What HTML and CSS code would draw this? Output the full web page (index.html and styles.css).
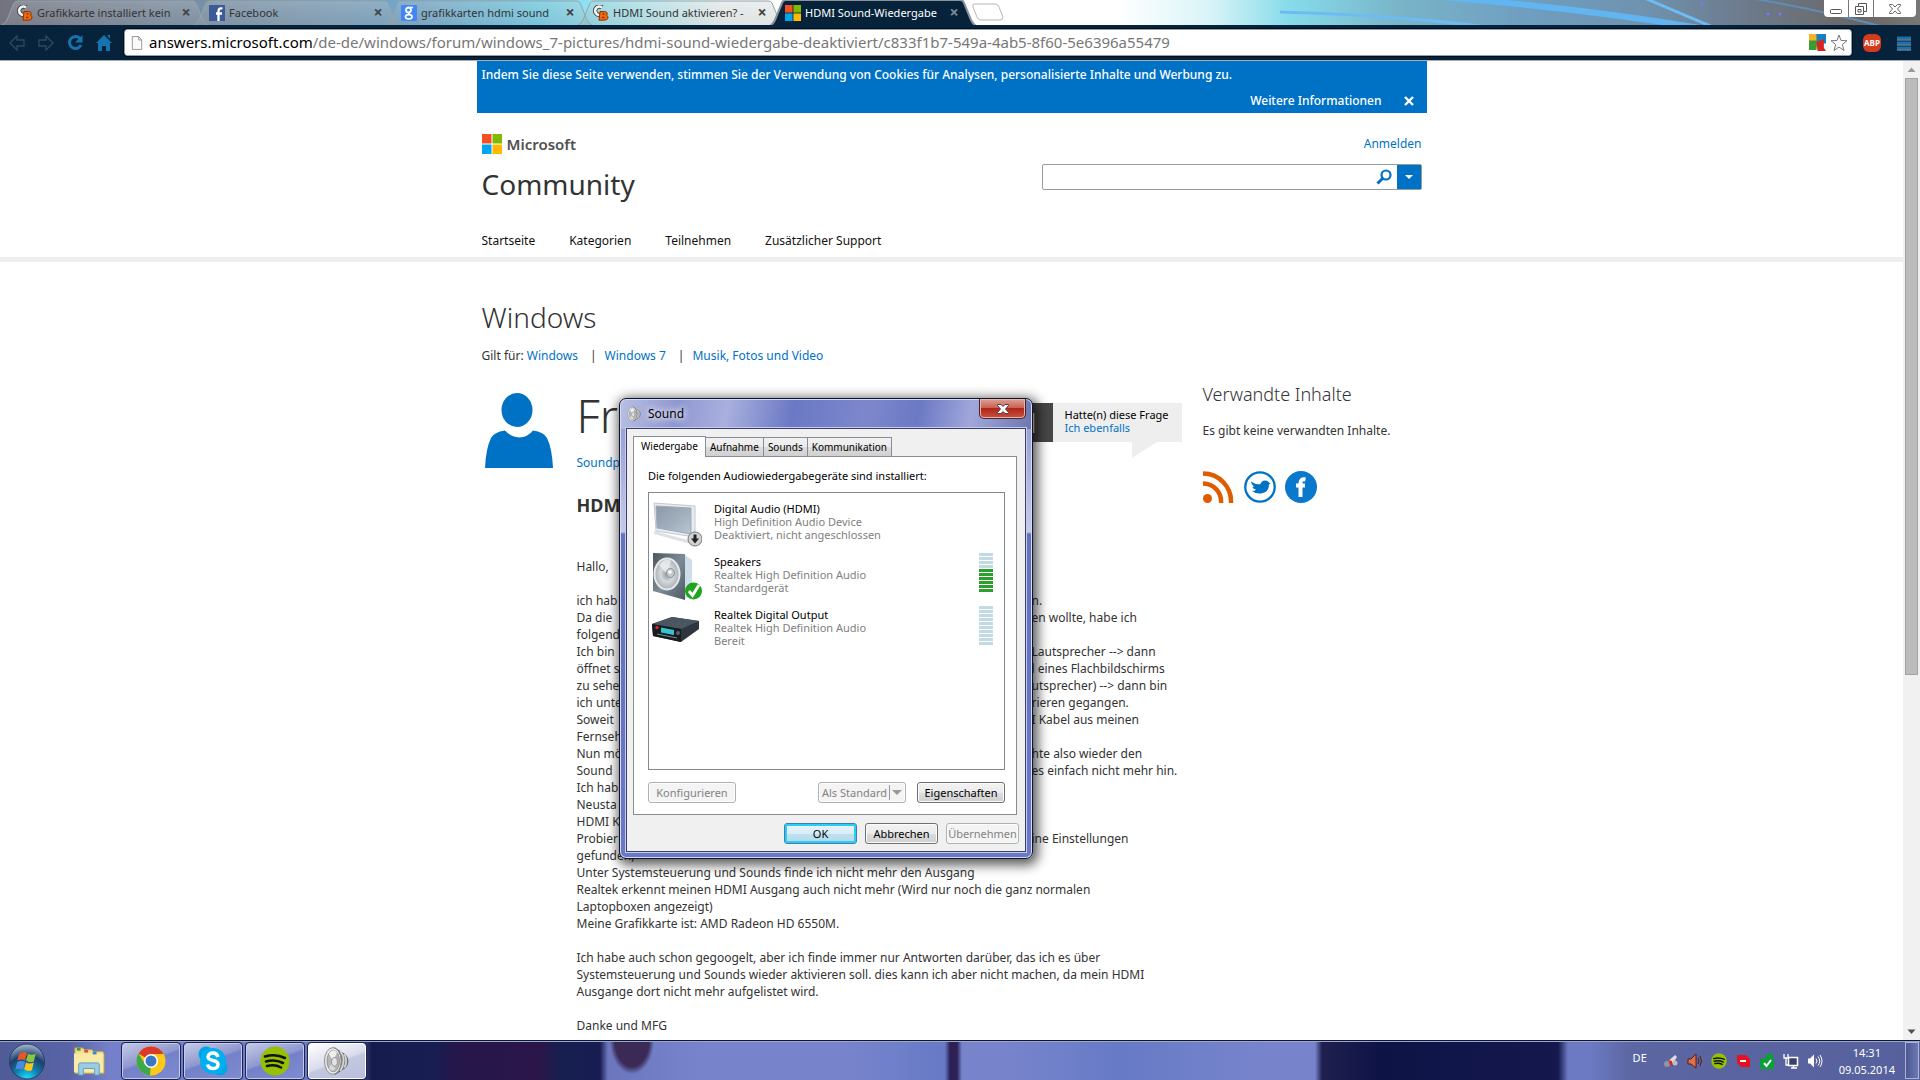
FILE: index.html
```html
<!DOCTYPE html>
<html lang="de">
<head>
<meta charset="utf-8">
<title>HDMI Sound-Wiedergabe</title>
<link rel="stylesheet" href="styles.css">
</head>
<body>
<svg class="defs" aria-hidden="true">
  <defs>
    <linearGradient id="tabfill" x1="0" y1="0" x2="0" y2="1"><stop offset="0" stop-color="#ccc" stop-opacity=".3"/><stop offset="1" stop-color="#999" stop-opacity=".25"/></linearGradient>
    <linearGradient id="screen" x1="0" y1="0" x2="1" y2="1"><stop offset="0" stop-color="#8a98a8"/><stop offset=".6" stop-color="#a4b1bf"/><stop offset="1" stop-color="#b9c6d3"/></linearGradient>
    <linearGradient id="box" x1="0" y1="0" x2="1" y2="1"><stop offset="0" stop-color="#49565f"/><stop offset=".5" stop-color="#7c8b95"/><stop offset="1" stop-color="#4c5962"/></linearGradient>
    <radialGradient id="cone"><stop offset="0" stop-color="#8d9499"/><stop offset=".5" stop-color="#d5d9dc"/><stop offset="1" stop-color="#a9afb4"/></radialGradient>
    <radialGradient id="orb" cx=".5" cy="1" r="1"><stop offset="0" stop-color="#1fe3ff"/><stop offset=".35" stop-color="#0f7fae"/><stop offset=".65" stop-color="#1d3f6b"/><stop offset="1" stop-color="#a9bcd2"/></radialGradient>
    <symbol id="mslogo" viewBox="0 0 20 20"><path fill="#f25022" d="M0 0h9.500v9.500H0z"/><path fill="#7fba00" d="M10.500 0H20v9.500h-9.500z"/><path fill="#00a4ef" d="M0 10.500h9.500V20H0z"/><path fill="#ffb900" d="M10.500 10.500H20V20h-9.500z"/></symbol>
    <symbol id="cb" viewBox="0 0 16 16"><path d="M9 2.500A4.200 4.200 0 1 0 9 9" fill="none" stroke="#444" stroke-width="4.400"/><path d="M9 2.500A4.200 4.200 0 1 0 9 9" fill="none" stroke="#f4f4f4" stroke-width="2.600"/><path d="M7 6.500h4.500q3 .2 2.800 2.300l-.8 1.600q2 .6 1.500 2.600-.6 2.200-3.500 2.200H6z" fill="#f36b0c" stroke="#8a3200"/><path d="M9.500 9h2M9 12.500h2.500" stroke="#8a3200" stroke-width="1.300"/></symbol>
    <symbol id="tabshape" viewBox="0 0 208 25" preserveAspectRatio="none"><path d="M1 25Q4 24 6 20L13 3Q14 1 17 1H191Q194 1 195 3L202 20Q204 24 207 25" fill="url(#tabfill)" stroke="#93a3ac"/></symbol>
    <symbol id="tabactive" viewBox="0 0 208 25" preserveAspectRatio="none"><path d="M1 26Q4 24 6 20L13 3Q14 0 17 0H191Q194 0 195 3L202 20Q204 24 207 26z" fill="#06233b" stroke="#8b9196" stroke-width="2"/></symbol>
    <symbol id="spot" viewBox="0 0 30 30"><circle cx="15" cy="15" r="14.500" fill="#95c100"/><path d="M5 10.500q11-3 20 1.500M6 15.500q9-2.500 17 1.500M7 20q8-2 14 1.500" fill="none" stroke="#111" stroke-width="2.600" stroke-linecap="round"/></symbol>
    <symbol id="speaker" viewBox="0 0 32 36"><path d="M13 2L22 8Q29 11 29 18T23 28L14 34z" fill="#858585" stroke="#555"/><path d="M20 6q8 10 0 24M25 10q4 8 0 16" fill="none" stroke="#d5d5d5" stroke-width="2"/><ellipse cx="11" cy="18" rx="10" ry="16" fill="#ececec" stroke="#7a7a7a"/><ellipse cx="11.500" cy="18" rx="7.500" ry="13" fill="#b4b4b4" stroke="#888"/><path d="M11 18L6 9q6-7 10-1z" fill="#eee"/><path d="M11 18l-5 9q4 5 8 1z" fill="#d8d8d8"/><ellipse cx="13" cy="19" rx="3.500" ry="5" fill="#e4e4e4" stroke="#888"/></symbol>
  </defs>
</svg>

<header class="chrome">
  <div class="tabstrip">
    <svg class="streaks" viewBox="0 0 640 25" aria-hidden="true"><path d="M150-4Q300 8 420 28" fill="none" stroke="#5fb8f7" stroke-width="6" opacity=".9"/><path d="M362-3L435 28M0 12q110 3 200 14" fill="none" stroke="#6cbcf2" stroke-width="3"/><path d="M470-2Q540 10 600 26" fill="none" stroke="#5f8fb8" stroke-width="2"/><g fill="#7d74ff"><circle cx="488" cy="14" r="1.500"/><circle cx="500" cy="14" r="1.500"/><circle cx="422" cy="4" r="1.500"/></g></svg>
    <div class="tab"><svg class="shape"><use href="#tabshape"/></svg><svg class="fav"><use href="#cb"/></svg><span class="label">Grafikkarte installiert kein</span><button aria-label="Tab schließen">×</button></div>
    <div class="tab"><svg class="shape"><use href="#tabshape"/></svg><svg class="fav" viewBox="0 0 16 16"><path fill="#3c5a98" d="M0 0h16v16H0z"/><path d="M13.500 3.500Q9.500 2.500 9.500 6.500V16M7 8.500h6" fill="none" stroke="#fff" stroke-width="2.300"/></svg><span class="label">Facebook</span><button aria-label="Tab schließen">×</button></div>
    <div class="tab"><svg class="shape"><use href="#tabshape"/></svg><svg class="fav" viewBox="0 0 16 16"><rect width="16" height="16" rx="1" fill="#4285f4"/><circle cx="7.500" cy="5" r="2.500" fill="none" stroke="#fff" stroke-width="1.800"/><path d="M9 2.500h3M9 7q-2.500 1.500 0 2.500" fill="none" stroke="#fff" stroke-width="1.500"/><ellipse cx="7.800" cy="11.800" rx="3.300" ry="2.200" fill="none" stroke="#fff" stroke-width="1.600"/></svg><span class="label">grafikkarten hdmi sound</span><button aria-label="Tab schließen">×</button></div>
    <div class="tab"><svg class="shape"><use href="#tabshape"/></svg><svg class="fav"><use href="#cb"/></svg><span class="label">HDMI Sound aktivieren? -</span><button aria-label="Tab schließen">×</button></div>
    <div class="tab active"><svg class="shape"><use href="#tabactive"/></svg><svg class="fav"><use href="#mslogo"/></svg><span class="label">HDMI Sound-Wiedergabe</span><button aria-label="Tab schließen">×</button></div>
    <button class="newtab" aria-label="Neuer Tab"><svg viewBox="0 0 34 18"><path d="M3 1h21q3 0 4 3l4 10q0 3-3 3H10q-3 0-4-3L2 4Q1 1 3 1z" fill="#fff" fill-opacity=".5" stroke="#b5b5b5"/></svg></button>
    <div class="winctl">
      <button aria-label="Minimieren"><svg viewBox="0 0 14 16"><rect x="1.500" y="8.500" width="11" height="4" rx="1" fill="#fff" stroke="#555"/></svg></button>
      <button aria-label="Verkleinern"><svg viewBox="0 0 14 16"><path d="M4.500 2.500h8v8h-3v3h-8v-8h3z" fill="#fff" stroke="#555"/><path d="M4.500 5.500h5v5M4 8.500h3v2.500H4z" fill="none" stroke="#555"/></svg></button>
      <button class="wide" aria-label="Schließen"><svg viewBox="0 0 14 16"><path d="M1.500 3.500h3L7 6l2.500-2.500h3v1L9.500 8l3 3.500v1h-3L7 10l-2.500 2.500h-3v-1L4.500 8l-3-3.500z" fill="#fff" stroke="#666"/></svg></button>
    </div>
  </div>
  <div class="toolbar">
    <button aria-label="Zurück"><svg viewBox="0 0 18 18"><path d="M9 2L2 9l7 7v-4h7V6H9z" fill="none" stroke="#2d4a62" stroke-width="1.300"/></svg></button>
    <button aria-label="Vorwärts"><svg viewBox="0 0 18 18"><path d="M9 2l7 7-7 7v-4H2V6h7z" fill="none" stroke="#2d4a62" stroke-width="1.300"/></svg></button>
    <button aria-label="Neu laden"><svg viewBox="0 0 18 18"><path d="M14 4.500A6 6 0 1 0 15 11" fill="none" stroke="#1773ad" stroke-width="3"/><path d="M16.500 1v7.500H9z" fill="#1773ad"/></svg></button>
    <button aria-label="Startseite"><svg viewBox="0 0 18 18"><path d="M9 1l8 8h-2v8h-4v-5H7v5H3V9H1zM12 1h3v4z" fill="#1773ad"/></svg></button>
    <div class="omni">
      <svg class="doc" viewBox="0 0 14 18"><path d="M1.500 1.500H9l3.500 4v11h-11zM9 1.500v4h3.500" fill="#fafafa" stroke="#8a8a8a"/></svg>
      <div class="url"><span>answers.microsoft.com</span><span class="path">/de-de/windows/forum/windows_7-pictures/hdmi-sound-wiedergabe-deaktiviert/c833f1b7-549a-4ab5-8f60-5e6396a55479</span></div>
      <svg class="avg" viewBox="0 0 16 16"><path fill="#f5b324" d="M0 0h8v7H0z"/><path fill="#1580c4" d="M7 0h9v9H7z"/><path fill="#3c9b35" d="M0 6h8l-1 9H0z"/><path fill="#d7261e" d="M7 7l7-2v8l2 3h-8z"/></svg>
      <svg class="star" viewBox="0 0 18 18"><path d="M9 1l2 5.500 6 .2-4.700 3.800 1.700 6L9 13l-5 3.500 1.700-6L1 6.700l6-.2z" fill="#fff" stroke="#777"/></svg>
    </div>
    <button class="abp"><span>ABP</span></button>
    <button aria-label="Menü"><svg viewBox="0 0 16 18"><path d="M1 4h14M1 9h14M1 14h14" stroke="#1773ad" stroke-width="3"/><path d="M1 6h14M1 11h14M1 16h14" stroke="#8fa6b5"/></svg></button>
  </div>
</header>

<main class="viewport">
  <div class="page">
    <div class="cookie">
      <span>Indem Sie diese Seite verwenden, stimmen Sie der Verwendung von Cookies für Analysen, personalisierte Inhalte und Werbung zu.</span>
      <div class="more"><a href="#">Weitere Informationen</a><button aria-label="Schließen"><svg viewBox="0 0 10 10"><path d="M1 1l8 8M9 1L1 9" stroke="#fff" stroke-width="2.400"/></svg></button></div>
    </div>
    <div class="head wrap">
      <div>
        <div class="ms"><svg><use href="#mslogo"/></svg>Microsoft</div>
        <div class="community">Community</div>
      </div>
      <div class="headright">
        <a href="#">Anmelden</a>
        <form class="search"><input type="text" aria-label="Suche"><button type="button" class="mag" aria-label="Suchen"><svg viewBox="0 0 16 16"><circle cx="10" cy="6" r="4.500" fill="none" stroke="#0072c6" stroke-width="2.200"/><path d="M7 9l-5.500 5.500" stroke="#0072c6" stroke-width="3"/></svg></button><button type="button" class="drop" aria-label="Suchoptionen"><svg viewBox="0 0 8 4"><path d="M0 0h8L4 4z" fill="#fff"/></svg></button></form>
      </div>
    </div>
    <nav class="wrap nav"><a href="#">Startseite</a><a href="#">Kategorien</a><a href="#">Teilnehmen</a><a href="#">Zusätzlicher Support</a></nav>
    <div class="band"></div>
    <div class="wrap">
      <h1>Windows</h1>
      <p class="applies"><span>Gilt für: <a href="#">Windows</a></span><span class="bar">|</span><a href="#">Windows 7</a><span class="bar">|</span><a href="#">Musik, Fotos und Video</a></p>
    </div>
    <div class="wrap cols">
      <svg class="avatar" viewBox="0 0 68 75"><ellipse cx="32" cy="17" rx="15.500" ry="17" fill="#0072c6"/><path d="M0 75Q1 55 6 45 9 39 20 37.500 26 44 34 44.500 43 44 48 37.500 59 39 62 45 67 55 68 75z" fill="#0072c6"/></svg>
      <article>
        <div class="qhead"><h2>Frage</h2>
          <div class="votes"><div class="count">1</div><div class="vote"><span>Hatte(n) diese Frage</span><a href="#">Ich ebenfalls</a></div></div>
        </div>
        <a class="author" href="#">Soundp</a>
        <h3>HDMI</h3>
        <div class="post">
          <p>Hallo,</p>
          <p class="gap split"><span>ich hab</span><span>n.</span></p>
          <p class="split"><span>Da die</span><span>en wollte, habe ich</span></p>
          <p>folgend</p>
          <p class="split"><span>Ich bin</span><span>Lautsprecher --&gt; dann</span></p>
          <p class="split"><span>öffnet s</span><span>l eines Flachbildschirms</span></p>
          <p class="split"><span>zu sehe</span><span>utsprecher) --&gt; dann bin</span></p>
          <p class="split"><span>ich unte</span><span>rieren gegangen.</span></p>
          <p class="split"><span>Soweit</span><span>I Kabel aus meinen</span></p>
          <p>Fernseh</p>
          <p class="split"><span>Nun mö</span><span>hte also wieder den</span></p>
          <p class="split"><span>Sound</span><span>es einfach nicht mehr hin.</span></p>
          <p>Ich hab</p>
          <p>Neusta</p>
          <p>HDMI K</p>
          <p class="split"><span>Probier</span><span>ine Einstellungen</span></p>
          <p>gefunden,</p>
          <p>Unter Systemsteuerung und Sounds finde ich nicht mehr den Ausgang</p>
          <p>Realtek erkennt meinen HDMI Ausgang auch nicht mehr (Wird nur noch die ganz normalen<br>Laptopboxen angezeigt)</p>
          <p>Meine Grafikkarte ist: AMD Radeon HD 6550M.</p>
          <p class="gap">Ich habe auch schon gegoogelt, aber ich finde immer nur Antworten darüber, das ich es über<br>Systemsteuerung und Sounds wieder aktivieren soll. dies kann ich aber nicht machen, da mein HDMI<br>Ausgange dort nicht mehr aufgelistet wird.</p>
          <p class="gap">Danke und MFG</p>
        </div>
      </article>
      <aside>
        <h4>Verwandte Inhalte</h4>
        <p>Es gibt keine verwandten Inhalte.</p>
        <div class="social">
          <a href="#" aria-label="RSS"><svg viewBox="0 0 32 32"><g fill="none" stroke="#e05a00" stroke-width="4.500"><path d="M0 2.500A28 28 0 0 1 28 32"/><path d="M0 12.500A18 18 0 0 1 18 32"/></g><circle cx="4.500" cy="27.500" r="4.500" fill="#e05a00"/></svg></a>
          <a href="#" aria-label="Twitter"><svg viewBox="0 0 32 32"><circle cx="16" cy="16" r="14.700" fill="#fff" stroke="#0072c6" stroke-width="2.300"/><path d="M7 10.500q5 3.500 9.500 2.500 1-3.500 4.500-3.500 3 0 4 2l1.500 1-1.500 1q0 8-8 9-5 .5-9-2.500 3 0 4-1.500-3-.5-3.500-2.500l1.500-.5q-3-2-3-5z" fill="#0072c6"/></svg></a>
          <a href="#" aria-label="Facebook"><svg viewBox="0 0 32 32"><circle cx="16" cy="16" r="16" fill="#0a78cc"/><path d="M20.500 8.500Q15.500 7.500 15.500 12V26M11 14.500h9" fill="none" stroke="#fff" stroke-width="4"/></svg></a>
        </div>
      </aside>
    </div>
  </div>
  <div class="scroll"><svg viewBox="0 0 17 17"><path d="M4.500 11h8l-4-4.500z" fill="#999"/></svg><div class="thumb"></div><svg class="down" viewBox="0 0 17 17"><path d="M4.500 6.500h8l-4 4.500z" fill="#505050"/></svg></div>
</main>

<section class="dialog" role="dialog" aria-label="Sound">
  <div class="title"><svg viewBox="0 0 32 36"><use href="#speaker"/></svg><span>Sound</span><button class="x" aria-label="Schließen"><svg viewBox="0 0 14 12"><path d="M1.500 1.500h3.500L7 3.500l2-2h3.500v1L9.500 6l3 3.500v1H9l-2-2-2 2H1.500v-1L4.500 6l-3-3.500z" fill="#fff" stroke="#5d3a48"/></svg></button></div>
  <div class="client">
    <div class="dtabs"><button class="on">Wiedergabe</button><button>Aufnahme</button><button>Sounds</button><button>Kommunikation</button></div>
    <div class="panel">
      <p>Die folgenden Audiowiedergabegeräte sind installiert:</p>
      <ul>
        <li><svg viewBox="0 0 50 50"><path d="M2 3l41 3v31L4 31z" fill="#e9edf1" stroke="#c3c9cf"/><path d="M4 6l35 2v26L5 28z" fill="url(#screen)" stroke="#9eabb7"/><path d="M2 31l34 9 7-3v3l-8 3-33-9z" fill="#dde1e5"/><circle cx="43" cy="39" r="7" fill="#d2d2d2" stroke="#777"/><path d="M41.500 34.500h3v4H47l-4 5-4-5h2.500z" fill="#222"/></svg><div><b>Digital Audio (HDMI)</b><span>High Definition Audio Device</span><span>Deaktiviert, nicht angeschlossen</span></div></li>
        <li><svg viewBox="0 0 50 50"><path d="M33 2l7 5v34l-7 5z" fill="#cfdcea"/><path d="M1 0l32 1v46L1 38z" fill="url(#box)"/><ellipse cx="15" cy="21" rx="12.500" ry="15.500" fill="url(#cone)" stroke="#e5e9eb" stroke-width="2"/><path d="M15 21L7 12q6-8 12-4z" fill="#eceff1" opacity=".8"/><ellipse cx="18.500" cy="20" rx="4" ry="4.500" fill="#c3c8cb" stroke="#8c9296"/><circle cx="18" cy="19" r="1.800" fill="#fff"/><circle cx="41.500" cy="38" r="8.500" fill="#1ea51d"/><path d="M37 38l3.500 4.500L47 32" fill="none" stroke="#fff" stroke-width="3"/></svg><div><b>Speakers</b><span>Realtek High Definition Audio</span><span>Standardgerät</span></div><div class="meter live"></div></li>
        <li><svg viewBox="0 0 50 50"><path d="M0 18L20 11l27 4v8L29 36 1 30z" fill="#2e373f"/><path d="M0 18l20-7 27 4-18 8z" fill="#4a5660"/><path d="M0 18l29 5v13L1 30z" fill="#151b21"/><path d="M9 21.500l13 2.500v5L9 26.500z" fill="#35c3cd"/><path d="M5 28l20 4" stroke="#7b868f"/><circle cx="5" cy="21.500" r="1.700" fill="#d22"/><circle cx="26" cy="27" r="2" fill="#59646d"/></svg><div><b>Realtek Digital Output</b><span>Realtek High Definition Audio</span><span>Bereit</span></div><div class="meter"></div></li>
      </ul>
      <div class="row"><button disabled>Konfigurieren</button><button class="std" disabled>Als Standard<i></i></button><button>Eigenschaften</button></div>
    </div>
    <div class="foot"><button class="ok">OK</button><button>Abbrechen</button><button disabled>Übernehmen</button></div>
  </div>
</section>

<footer class="taskbar">
  <button class="start" aria-label="Start"><svg viewBox="0 0 38 38"><circle cx="19" cy="19" r="18" fill="url(#orb)" stroke="#2a3c66"/><path d="M11 11q4-3 8-1l-2 8q-4-2-8 0z" fill="#e8542b"/><path d="M20 11q4 2 8 0l-2 8q-4 2-8-1z" fill="#8cc63f"/><path d="M9 19.500q4-2 8 0l-2 8q-4-2-8 0z" fill="#4a8be0"/><path d="M18 20q4 2 8 0l-2 8q-4 2-8-1z" fill="#fcc419"/></svg></button>
  <button class="explorer" aria-label="Explorer"><svg viewBox="0 0 34 32"><path d="M2 2h8l2 2h8l2 2h9q2 0 2 3v20H2z" fill="#f3dd8a" stroke="#c9a94c"/><path d="M1 8h31v20H1z" fill="#f9eaa8"/><path d="M4 2h4v3H4z" fill="#3f9a48"/><path d="M12 4h4v3h-4z" fill="#d8503a"/><path d="M21 6h4v3h-4z" fill="#3a86c8"/><path d="M6 31V20q0-2 2-2h18q2 0 2 2v11h-5v-7H11v7z" fill="#9ccbe6" stroke="#5d9dc4"/></svg></button>
  <button class="app" aria-label="Chrome"><svg viewBox="0 0 30 30"><circle cx="15" cy="15" r="14.500" fill="#fbc916"/><path d="M15 15L2.500 7.500A14.500 14.500 0 0 1 27.700 8H15z" fill="#db3a2b"/><path d="M15 15l-1 14.500A14.500 14.500 0 0 1 2.500 7.500L9 18z" fill="#3ea84a"/><circle cx="15" cy="15" r="7" fill="#fff"/><circle cx="15" cy="15" r="5.500" fill="#3b78c4"/></svg></button>
  <button class="app" aria-label="Skype"><svg viewBox="0 0 30 30"><circle cx="8" cy="8" r="7.500" fill="#00a5e3"/><circle cx="22" cy="22" r="7.500" fill="#00a5e3"/><circle cx="15" cy="15" r="13" fill="#00aff0"/><path d="M20 11q-1-4-5-4t-5 3.500q0 3 5 4t5 4q0 4-5 4-4.500 0-5.500-4" fill="none" stroke="#fff" stroke-width="3.400"/></svg></button>
  <button class="app" aria-label="Spotify"><svg><use href="#spot"/></svg></button>
  <button class="app front" aria-label="Sound"><svg><use href="#speaker"/></svg></button>
  <div class="tray">
    <span class="lang">DE</span>
    <svg viewBox="0 0 16 16"><path d="M3 10l9-8 2 2-5 8z" fill="#d9dce4"/><circle cx="4" cy="11" r="3" fill="#8d93a8"/><circle cx="12" cy="10" r="2.500" fill="#b8bccb"/><path d="M5 7l4 1 1 5-3-1z" fill="#d32a1e"/></svg>
    <svg viewBox="0 0 16 16"><path d="M1 6h3l5-5v14l-5-4H1z" fill="#e0714c" stroke="#5b1d10"/><path d="M11 5q2 3 0 6M13 3q3 5 0 10" fill="none" stroke="#5b1d10"/></svg>
    <svg><use href="#spot"/></svg>
    <svg viewBox="0 0 16 16"><path d="M2 2h9l4 4v8H6L2 10z" fill="#e81123"/><path d="M5 8h6" stroke="#fff" stroke-width="2"/></svg>
    <svg viewBox="0 0 16 16"><path d="M1 6l6-1V1h7v5h1v10H1z" fill="#0aa038"/><path d="M5 10l2.500 3L12 7" fill="none" stroke="#fff" stroke-width="2"/></svg>
    <svg viewBox="0 0 16 16"><path d="M5.500 4.500h9v8h-9zM8 15h6M10.500 12v3" fill="#38406d" stroke="#fff" stroke-width="1.500"/><path d="M1 1v4h4V1M3 5v7h2" fill="none" stroke="#fff" stroke-width="1.300"/></svg>
    <svg viewBox="0 0 16 16"><path d="M1 5.500h2l4-4v13l-4-4H1z" fill="#fff"/><path d="M9 5.500q2 2.500 0 5M11 3.500q3.500 4.500 0 9M13 2q4 6 0 12" fill="none" stroke="#fff"/></svg>
    <div class="clock"><span>14:31</span><span>09.05.2014</span></div>
  </div>
  <button class="peek" aria-label="Desktop anzeigen"></button>
</footer>
</body>
</html>
```
FILE: styles.css
```css
* { box-sizing: border-box; }
body {
  margin: 0;
  height: 100vh;
  overflow: hidden;
  display: flex;
  flex-direction: column;
  background: #fff;
  color: #333;
  font: 12px/17px "Noto Sans", "Open Sans", sans-serif;
}
button, input { font: inherit; padding: 0; border: 0; background: none; color: inherit; }
a { color: #0072c6; text-decoration: none; }
p, h1, h2, h3, h4, ul { margin: 0; padding: 0; font-weight: 400; }
svg { display: block; flex: none; }
.defs { position: absolute; width: 0; height: 0; }

/* browser frame */
.chrome { flex: none; background: #06233b; border-bottom: 1px solid #a5adb3; color: #222; }
.tabstrip {
  height: 25px;
  display: flex;
  padding-left: 13px;
  position: relative;
  overflow: hidden;
  background: linear-gradient(90deg, #73737f 0, #76869a 130px, #7a9bb5 300px, #72a8cc 420px, #6fd4ee 540px, #b5eff6 640px, #f4fbfc 720px, #fff 800px, #fff 1120px, #d8f4f8 1210px, #86dbea 1290px, #79b4c9 1400px, #6f9fc0 1520px, #6f93b0 1640px, #6d7c8e 1740px, #6a6664 1860px, #777 100%);
}
.streaks { position: absolute; right: 0; top: 0; width: 640px; height: 25px; }
.tab { width: 192px; height: 25px; display: flex; align-items: center; padding: 0 8px 0 4px; position: relative; color: #333; font-size: 11px; }
.tab .shape { position: absolute; left: -12px; top: 0; width: 208px; height: 25px; }
.tab .fav { width: 16px; height: 16px; margin-right: 4px; position: relative; }
.tab .label { flex: 1; white-space: nowrap; position: relative; }
.tab button { width: 22px; font-size: 16px; font-weight: 700; line-height: 17px; position: relative; color: #444; }
.tab.active { color: #fff; }
.tab.active button { color: #7b8b99; }
.newtab { width: 34px; }
.newtab svg { width: 34px; height: 18px; margin: -2px 0 0 -2px; }
.winctl { margin: 0 4px 8px auto; display: flex; background: #fff; border-radius: 0 0 4px 4px; position: relative; }
.winctl button { width: 25px; border-right: 1px solid #777; display: grid; place-items: center; }
.winctl .wide { width: 42px; border: 0; }
.winctl svg { width: 14px; height: 16px; }
.toolbar { height: 35px; display: flex; align-items: center; gap: 11px; padding: 0 7px 0 8px; }
.toolbar button svg { width: 18px; height: 18px; }
.omni { flex: 1; height: 27px; display: flex; align-items: center; background: #fff; border: 1px solid #90a0ac; border-radius: 3px; padding: 0 3px 0 6px; min-width: 0; outline: 1px solid #020d18; }
.omni .doc { width: 12px; height: 16px; margin-right: 6px; }
.url { flex: 1; font-size: 15px; line-height: 20px; padding-bottom: 2px; color: #000; white-space: nowrap; }
.url .path { color: #777; }
.avg { width: 17px; height: 17px; margin-right: 4px; }
.star { width: 18px; height: 18px; }
.abp { width: 18px; height: 18px; display: grid; place-items: center; background: #d63a1c; border-radius: 6px; color: #fff; font-weight: 700; font-size: 8px; line-height: 18px; margin-right: 3px; }

/* page */
.viewport { flex: 1; min-height: 0; display: flex; }
.page { flex: 1; min-width: 0; overflow: hidden; }
.cookie, .wrap { width: 950px; max-width: 100%; margin: 0 auto; padding: 0 5px; }
.cookie { background: #0072c6; color: #fff; height: 52px; padding-top: 5px; font-weight: 500; }
.cookie .more { display: flex; justify-content: flex-end; align-items: center; gap: 22px; padding: 9px 8px 0 0; }
.cookie a { color: #fff; }
.cookie svg { width: 10px; height: 10px; }
.head { display: flex; justify-content: space-between; padding-top: 21px; }
.ms { display: flex; align-items: center; gap: 5px; height: 20px; color: #505050; font-size: 15px; font-weight: 600; }
.ms svg { width: 20px; height: 20px; }
.community { font-size: 28px; line-height: 40px; margin-top: 10px; }
.headright { width: 380px; text-align: right; padding-top: 1px; }
.search { display: flex; height: 26px; border: 1px solid #999; border-radius: 2px; margin-top: 12px; }
.search input { flex: 1; min-width: 0; outline: 0; }
.mag { width: 26px; display: grid; place-items: center; }
.mag svg { width: 16px; height: 16px; }
.drop { width: 24px; background: #0072c6; display: grid; place-items: center; }
.drop svg { width: 8px; height: 4px; }
.nav { display: flex; gap: 34px; padding-top: 28px; height: 53px; }
.nav a { color: #111; }
.band { height: 5px; background: #eee; }
h1 { font-size: 28px; line-height: 40px; font-weight: 300; margin-top: 35px; }
.applies { display: flex; margin-top: 10px; }
.applies .bar { margin: 0 8px 0 12px; }
.cols { display: flex; align-items: flex-start; padding-top: 19px; }
.avatar { width: 68px; height: 75px; margin: 10px 24px 0 3px; }
article { width: 605px; }
.qhead { display: flex; justify-content: space-between; height: 69px; }
h2 { font-size: 46px; line-height: 64px; font-weight: 300; }
.votes { display: flex; margin-top: 20px; height: 39px; }
.count { width: 34px; background: #464646; color: #fff; font-size: 27px; line-height: 39px; padding-left: 6px; }
.vote { position: relative; width: 129px; background: #eee; color: #000; padding: 5px 12px; display: flex; flex-direction: column; font-size: 11px; line-height: 13px; white-space: nowrap; }
.vote::after { content: ""; position: absolute; left: 79px; top: 39px; border-top: 16px solid #eee; border-right: 25px solid transparent; }
.author { display: block; margin-top: 2px; }
h3 { font-size: 18px; line-height: 24px; font-weight: 700; margin: 22px 0 41px; }
.post { white-space: nowrap; }
.gap { margin-top: 17px; }
.split { display: grid; grid-template-columns: 455px 1fr; }
aside { margin-left: 21px; }
h4 { font-size: 18px; line-height: 22px; font-weight: 300; }
aside p { margin-top: 17px; }
.social { display: flex; gap: 9px; margin-top: 32px; }
.social svg { width: 32px; height: 32px; }
.scroll { width: 17px; background: #f1f1f1; display: flex; flex-direction: column; }
.scroll svg { width: 17px; height: 17px; }
.thumb { height: 61%; margin: 0 2px; background: #bcbcbc; border: 1px solid #a2a2a2; }
.scroll .down { margin-top: auto; }

/* sound window, floating over the browser */
.dialog {
  position: absolute; left: 619px; top: 398px; width: 414px;
  padding: 0 6px 6px;
  border: 1px solid #10132a; border-radius: 7px;
  background:
    linear-gradient(100deg, #b9c0e3 0, #8f97d0 14%, #a9b0de 26%, #6b78c4 42%, #7d88cc 60%, #6b78c4 72%, #a0a8da 85%, #6c76ae 100%) 0 0 / 100% 30px no-repeat,
    linear-gradient(#8f98d0 0, #a9b0de 70px, #c5caea 133px, #6472bc 135px, #6a78c6 100%);
  box-shadow: inset 0 0 0 1px #d4dbf6, 2px 3px 12px 3px rgba(0,0,0,.65);
  color: #000; font-size: 11px; line-height: 13px;
}
.title { height: 29px; display: flex; align-items: center; gap: 6px; font-size: 12px; padding-left: 1px; }
.title > svg { width: 15px; height: 16px; }
.title span { text-shadow: 0 0 8px #fff, 0 0 6px #fff; }
.x { margin: 0 0 9px auto; width: 47px; height: 20px; display: grid; place-items: center; border: 1px solid #4c2330; border-top: 0; border-radius: 0 0 5px 5px; background: linear-gradient(#dda296 0, #c96353 45%, #b0261a 50%, #c9513c 100%); box-shadow: inset 0 0 0 1px #e5b5ad; }
.x svg { width: 14px; height: 12px; }
.client { background: #f0f0f0; border: 1px solid #3b3f63; box-shadow: 0 0 0 1px #c5ccf0; padding: 7px 6px; }
.dtabs { display: flex; align-items: flex-end; }
.dtabs button { height: 19px; padding: 0 4px; white-space: nowrap; font-size: 10px; border: 1px solid #898c95; border-bottom: 0; margin-right: -1px; background: linear-gradient(#f2f2f2 0, #ebebeb 50%, #dcdcdc 51%, #d0d0d0 100%); }
.dtabs .on { height: 21px; padding: 0 7px 2px; background: #fff; margin-bottom: -1px; position: relative; }
.panel { background: #fff; border: 1px solid #898c95; padding: 12px 11px 11px 14px; margin-right: 2px; }
ul { list-style: none; height: 278px; border: 1px solid #828790; margin-top: 10px; padding-top: 7px; }
li { display: flex; height: 53px; padding-left: 3px; gap: 12px; }
li > svg { width: 50px; height: 50px; }
li > div { padding-top: 2px; }
li b { font-weight: 400; }
li b, li span { display: block; }
li span { color: #808080; }
li .meter { margin: 0 11px 0 auto; padding: 0; width: 14px; height: 39px; background: repeating-linear-gradient(#c1dae3 0 3px, #fff 3px 4px); }
li .meter.live { background: repeating-linear-gradient(transparent 0 3px, #fff 3px 4px), linear-gradient(#c1dae3 16px, #2c9f2f 16px); }
.row { display: flex; gap: 11px; margin-top: 12px; }
.row button, .foot button { height: 21px; border: 1px solid #707070; border-radius: 3px; background: linear-gradient(#f2f2f2 0, #ebebeb 50%, #dddddd 51%, #cfcfcf 100%); box-shadow: inset 0 0 0 1px #fcfcfc; white-space: nowrap; }
.row button { width: 88px; }
.row button:first-child { margin-right: auto; }
.row button:disabled, .foot button:disabled { background: #f4f4f4; border-color: #adb2b5; color: #838383; }
.row .std { display: flex; align-items: center; justify-content: space-between; padding: 0 2px 0 3px; }
.std i { border-left: 1px solid #999; height: 15px; width: 14px; display: grid; place-items: center; }
.std i::before { content: ""; border: 5px solid transparent; border-top-color: #999; border-bottom: 0; }
.foot { display: flex; justify-content: flex-end; gap: 8px; padding: 8px 0 0; }
.foot button { width: 73px; }
.foot .ok { border-color: #3c7fb1; background: linear-gradient(#e9f5fb 0, #d8eef9 50%, #bfe0f1 51%, #b4d9ec 100%); box-shadow: inset 0 0 0 2px #2bcdf5; }

/* taskbar */
.taskbar {
  flex: none; height: 40px; display: flex; position: relative; padding: 2px 0 1px 8px;
  border-top: 1px solid #10172c; box-shadow: inset 0 1px 0 #9aa6d4; color: #fff;
  background:
    radial-gradient(ellipse at 50% 0, #3a2a55 50%, transparent 65%) 608px 0 / 48px 36px no-repeat,
    linear-gradient(90deg, #4f5b96 0, #5864a6 70px, #7480ca 110px, #6a78c2 350px, #151c4c 372px, #181d52 435px, #25164a 455px, #2a1549 540px, #171f50 560px, #171c50 600px, #6b76bd 608px, #7784cc 700px, #7784cc 850px, #677ac6 945px, #2d2055 950px, #2d2055 957px, #7784cc 962px, #7784cc 1010px, #677ac6 1120px, #7784cc 1260px, #7784cc 1315px, #1f204f 1322px, #0e1346 1380px, #14184d 1558px, #6b7ac2 1568px, #6b7ac2 1590px, #5c66a2 1630px, #55609c 100%);
}
.start { width: 38px; }
.start svg { width: 38px; height: 37px; }
.explorer { width: 34px; margin: 0 16px 0 26px; display: grid; place-items: center; }
.explorer svg { width: 34px; height: 30px; }
.app { width: 58px; margin-right: 4px; display: grid; place-items: center; border: 1px solid #c3c9ea; border-radius: 3px; outline: 1px solid #1b2350; background: linear-gradient(160deg, #c4c9e6 0, #8f98d0 45%, #7481c8 50%, #7f8bd0 100%); }
.app svg { width: 30px; height: 30px; }
.app.front { background: linear-gradient(160deg, #fff 0, #d9dcec 50%, #c3c8e0 55%, #b9bfdc 100%); border-color: #fff; }
.tray { margin-left: auto; display: flex; align-items: center; gap: 8px; font-size: 11px; }
.tray svg { width: 16px; height: 16px; }
.lang { margin: -8px 8px 0 0; }
.clock { display: flex; flex-direction: column; align-items: center; margin: 0 10px 0 8px; }
.peek { width: 14px; margin: -1px 1px 0 0; border: 1px solid #a9b3dc; background: linear-gradient(90deg, #4c588f, #6d79b4); }
```
